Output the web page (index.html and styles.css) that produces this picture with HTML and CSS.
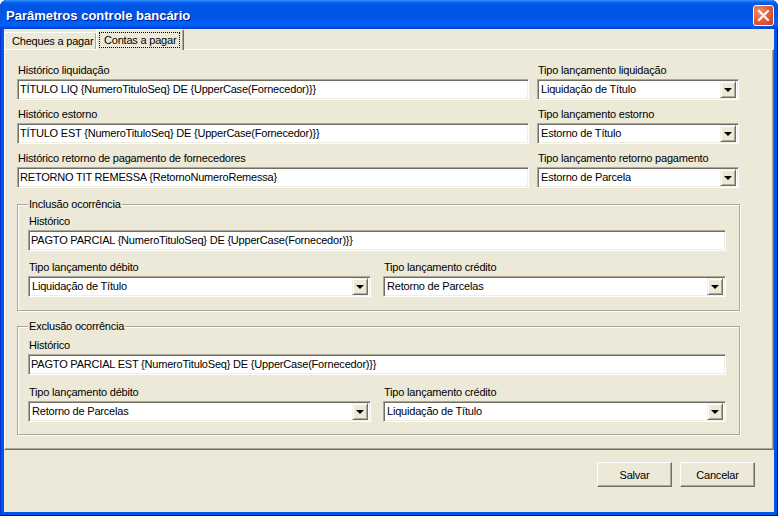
FILE: index.html
```html
<!DOCTYPE html>
<html lang="pt-BR">
<head>
<meta charset="utf-8">
<title>Parâmetros controle bancário</title>
<link rel="stylesheet" href="styles.css">
</head>
<body>
<div class="window">
  <div class="titlebar">
    <span class="title">Parâmetros controle bancário</span>
    <div class="close">
      <svg width="13" height="13" viewBox="0 0 13 13"><path d="M2 2 L11 11 M11 2 L2 11" stroke="#fff" stroke-width="2" stroke-linecap="square"/></svg>
    </div>
  </div>
  <div class="client">
    <div class="tabs">
      <div class="tab">Cheques a pagar</div>
      <div class="tab active"><span class="focus">Contas a pagar</span></div>
    </div>
    <div class="panel">
      <div class="content">
        <div class="top-grid">
          <div class="field"><label>Histórico liquidação</label><div class="edit">TÍTULO LIQ {NumeroTituloSeq} DE {UpperCase(Fornecedor)}}</div></div>
          <div class="field"><label>Tipo lançamento liquidação</label><div class="combo"><span class="combo-text">Liquidação de Título</span><span class="drop"><i></i></span></div></div>
          <div class="field"><label>Histórico estorno</label><div class="edit">TÍTULO EST {NumeroTituloSeq} DE {UpperCase(Fornecedor)}}</div></div>
          <div class="field"><label>Tipo lançamento estorno</label><div class="combo"><span class="combo-text">Estorno de Título</span><span class="drop"><i></i></span></div></div>
          <div class="field"><label>Histórico retorno de pagamento de fornecedores</label><div class="edit">RETORNO TIT REMESSA {RetornoNumeroRemessa}</div></div>
          <div class="field"><label>Tipo lançamento retorno pagamento</label><div class="combo"><span class="combo-text">Estorno de Parcela</span><span class="drop"><i></i></span></div></div>
        </div>

        <fieldset class="group">
          <legend>Inclusão ocorrência</legend>
          <div class="group-grid">
            <div class="field wide"><label>Histórico</label><div class="edit">PAGTO PARCIAL {NumeroTituloSeq} DE {UpperCase(Fornecedor)}}</div></div>
            <div class="field"><label>Tipo lançamento débito</label><div class="combo"><span class="combo-text">Liquidação de Título</span><span class="drop"><i></i></span></div></div>
            <div class="field"><label>Tipo lançamento crédito</label><div class="combo"><span class="combo-text">Retorno de Parcelas</span><span class="drop"><i></i></span></div></div>
          </div>
        </fieldset>

        <fieldset class="group second">
          <legend>Exclusão ocorrência</legend>
          <div class="group-grid">
            <div class="field wide"><label>Histórico</label><div class="edit">PAGTO PARCIAL EST {NumeroTituloSeq} DE {UpperCase(Fornecedor)}}</div></div>
            <div class="field"><label>Tipo lançamento débito</label><div class="combo"><span class="combo-text">Retorno de Parcelas</span><span class="drop"><i></i></span></div></div>
            <div class="field"><label>Tipo lançamento crédito</label><div class="combo"><span class="combo-text">Liquidação de Título</span><span class="drop"><i></i></span></div></div>
          </div>
        </fieldset>
      </div>
    </div>
    <div class="footer">
      <div class="btn">Salvar</div>
      <div class="btn">Cancelar</div>
    </div>
  </div>
</div>
</body>
</html>
```

FILE: styles.css
```css
* { box-sizing: border-box; }
html, body { margin: 0; padding: 0; }
body {
  width: 778px;
  height: 516px;
  background: #ffffff;
  font-family: "Liberation Sans", Arial, sans-serif;
  font-size: 11px;
  color: #000;
  overflow: hidden;
}
.window {
  width: 778px;
  height: 516px;
  display: flex;
  flex-direction: column;
  background: #0055e5;
  border-radius: 7px 7px 0 0;
  padding: 0 4px 4px 4px;
  box-shadow: inset 1px 0 #0831d9, inset -1px 0 #00138c, inset 0 -1px #00138c;
}
.titlebar {
  height: 29px;
  margin: 0 -4px;
  padding: 0 4px 0 6px;
  display: flex;
  align-items: center;
  justify-content: space-between;
  border-radius: 7px 7px 0 0;
  background: linear-gradient(180deg, #3d95ff 0px, #0a66f0 2px, #0058ea 4px, #0054e3 9px, #0056e8 18px, #0062f7 24px, #0059ee 26px, #0047d8 28px, #003dc8 29px);
}
.title {
  color: #fff;
  font-weight: bold;
  font-size: 13px;
  text-shadow: 1px 1px 0 #0a1a8a;
  padding-top: 1px;
  white-space: nowrap;
}
.close {
  width: 21px;
  height: 21px;
  margin-top: 1px;
  border: 1px solid #fff;
  border-radius: 3px;
  background: radial-gradient(circle at 30% 30%, #f0926f 0%, #e2603d 45%, #c2401c 100%);
  display: flex;
  align-items: center;
  justify-content: center;
}
.client {
  flex: 1;
  background: #ece9d8;
  display: flex;
  flex-direction: column;
  letter-spacing: -0.2px;
}
.tabs {
  height: 20px;
  display: flex;
  align-items: flex-end;
  position: relative;
  z-index: 1;
  white-space: nowrap;
}
.tab {
  height: 17px;
  line-height: 16px;
  border-top: 1px solid #fff;
  border-left: 1px solid #fff;
  border-right: 1px solid #716f64;
  border-radius: 2px 2px 0 0;
  box-shadow: inset -1px 0 #aca899;
  background: #ece9d8;
}
.tab:first-child { width: 93px; padding-left: 7px; }
.tab.active {
  height: 21px;
  width: 88px;
  margin-left: -1px;
  margin-bottom: -1px;
  padding: 2px 3px 0 2px;
  line-height: 14px;
}
.focus {
  display: block;
  height: 16px;
  border: 1px dotted #000;
  padding: 0 0 0 4px;
}
.panel {
  height: 401px;
  border-top: 1px solid #fff;
  border-left: 1px solid #fff;
  border-right: 1px solid #716f64;
  border-bottom: 1px solid #716f64;
  box-shadow: inset -1px -1px #aca899;
  padding: 14px 0 0 12px;
}
.content {
  width: 723px;
}
.top-grid {
  display: grid;
  grid-template-columns: 512px 202px;
  column-gap: 8px;
  row-gap: 8px;
}
.field label {
  display: block;
  height: 13px;
  line-height: 13px;
  margin: 0 0 2px 1px;
  white-space: nowrap;
}
.edit, .combo {
  height: 21px;
  background: #fff;
  border: 1px solid;
  border-color: #aca899 #fff #fff #aca899;
  box-shadow: inset 1px 1px #716f64, inset -1px -1px #f1efe2;
  white-space: nowrap;
  overflow: hidden;
}
.edit {
  padding: 0 0 0 2px;
  line-height: 18px;
}
.combo {
  display: flex;
  align-items: center;
  padding: 2px 2px 2px 3px;
}
.combo-text {
  flex: 1;
  line-height: 15px;
}
.drop {
  width: 16px;
  height: 17px;
  background: #ece9d8;
  border: 1px solid;
  border-color: #f1efe2 #716f64 #716f64 #f1efe2;
  box-shadow: inset 1px 1px #fff, inset -1px -1px #aca899;
  display: flex;
  align-items: center;
  justify-content: center;
}
.drop i {
  width: 0;
  height: 0;
  border-left: 4px solid transparent;
  border-right: 4px solid transparent;
  border-top: 4px solid #000;
  margin-top: 1px;
}
.group {
  margin: 10px 0 0 0;
  padding: 4px 13px 13px 10px;
  border: 1px solid #aca899;
  box-shadow: inset 1px 1px #fff, 1px 1px #fff;
  min-inline-size: 0;
}
.group.second {
  margin-top: 9px;
  padding-top: 6px;
  padding-bottom: 12px;
}
.group legend {
  padding: 0 1px;
  line-height: 13px;
  background: #ece9d8;
}
.group-grid {
  display: grid;
  grid-template-columns: 1fr 1fr;
  column-gap: 12px;
  row-gap: 10px;
}
.group.second .group-grid { row-gap: 11px; }
.group-grid .wide { grid-column: 1 / 3; }
.footer {
  flex: 1;
  display: flex;
  justify-content: flex-end;
  align-items: flex-start;
  gap: 8px;
  padding: 12px 19px 0 0;
}
.btn {
  width: 75px;
  height: 25px;
  display: flex;
  align-items: center;
  justify-content: center;
  background: #ece9d8;
  border: 1px solid;
  border-color: #fff #716f64 #716f64 #fff;
  box-shadow: inset -1px -1px #aca899;
}
```
